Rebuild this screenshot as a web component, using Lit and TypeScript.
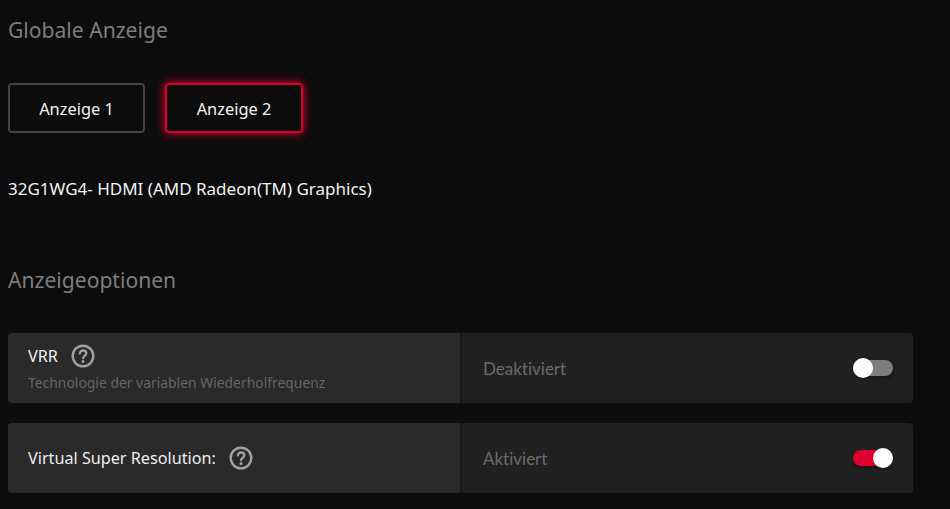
import { LitElement, html, css } from 'lit';
import { customElement } from 'lit/decorators.js';

const helpIcon = html`<svg class="help" viewBox="0 0 24 24" width="24" height="24" fill="none">
  <circle cx="12" cy="12" r="10.3" stroke="#a0a0a0" stroke-width="2.4"></circle>
  <path d="M8.8 9.6c0-1.9 1.4-3.1 3.3-3.1s3.2 1.1 3.2 2.8c0 1.3-.8 2-1.8 2.7-.9.6-1.4 1.1-1.4 2.2" stroke="#a0a0a0" stroke-width="2.3" stroke-linecap="round"></path>
  <circle cx="12" cy="17.6" r="1.5" fill="#a0a0a0"></circle>
</svg>`;

@customElement('app-root')
export class AppRoot extends LitElement {
  static styles = css`
    :host {
      display: block;
      height: 509px;
      overflow: hidden;
      background: #0c0c0c;
      color: #f2f2f2;
      font-family: 'Noto Sans', 'Open Sans', sans-serif;
    }
    .page {
      display: flex;
      flex-direction: column;
      width: 905px;
      padding: 16px 0 0 8px;
    }
    h2 {
      margin: 0;
      font-size: 21.1px;
      line-height: 28px;
      font-weight: 400;
      color: #7d7d7d;
    }
    .tabs {
      display: flex;
      gap: 20px;
      margin-top: 39px;
    }
    .tab {
      box-sizing: border-box;
      width: 137px;
      height: 50px;
      display: flex;
      align-items: center;
      justify-content: center;
      border: 2px solid #444;
      border-radius: 4px;
      font-size: 16.4px;
    }
    .tab.active {
      width: 138px;
      border-color: #d8002f;
      box-shadow: 0 0 8px 1px #c8002c;
    }
    .device {
      margin-top: 44px;
      font-size: 17px;
      line-height: 24px;
    }
    .options {
      margin-top: 65px;
    }
    .rows {
      display: flex;
      flex-direction: column;
      gap: 20px;
      margin-top: 39px;
    }
    .row {
      display: flex;
      height: 70px;
      border-radius: 4px;
      overflow: hidden;
      background: #212121;
    }
    .left {
      box-sizing: border-box;
      width: 454px;
      padding-left: 20px;
      display: flex;
      flex-direction: column;
      justify-content: center;
      background: #2a2a2a;
      border-right: 2px solid #1a1a1a;
      flex-shrink: 0;
    }
    .label {
      display: flex;
      align-items: center;
      gap: 13px;
      font-size: 16.2px;
      line-height: 24px;
      color: #eee;
    }
    .help {
      display: block;
    }
    .sub {
      font-size: 13.9px;
      line-height: 18px;
      margin-top: 6px;
      color: #666;
    }
    .right {
      flex: 1;
      display: flex;
      align-items: center;
      justify-content: space-between;
      padding: 0 20px 0 21px;
      font-family: 'Lato', 'Noto Sans', sans-serif;
      font-variant-ligatures: none;
      font-size: 17px;
      color: #6a6a6a;
    }
    .toggle {
      display: flex;
      align-items: center;
      width: 40px;
      height: 16px;
      border-radius: 8px;
      background: #7e7e7e;
      box-shadow: 0 2px 4px rgba(0, 0, 0, 0.4);
    }
    .toggle.on {
      justify-content: flex-end;
      background: #e0002e;
    }
    .knob {
      width: 20px;
      height: 20px;
      border-radius: 50%;
      background: #fff;
    }
  `;

  renderRow(label: unknown, sub: string, value: string, on: boolean) {
    return html`<div class="row">
      <div class="left">
        <div class="label">${label}${helpIcon}</div>
        ${sub ? html`<div class="sub">${sub}</div>` : ''}
      </div>
      <div class="right">
        <span>${value}</span>
        <div class="toggle ${on ? 'on' : ''}"><div class="knob"></div></div>
      </div>
    </div>`;
  }

  render() {
    return html`<div class="page">
      <h2>Globale Anzeige</h2>
      <div class="tabs">
        <div class="tab">Anzeige 1</div>
        <div class="tab active">Anzeige 2</div>
      </div>
      <div class="device">32G1WG4- HDMI (AMD Radeon(TM) Graphics)</div>
      <h2 class="options">Anzeigeoptionen</h2>
      <div class="rows">
        ${this.renderRow('VRR', 'Technologie der variablen Wiederholfrequenz', 'Deaktiviert', false)}
        ${this.renderRow('Virtual Super Resolution:', '', 'Aktiviert', true)}
      </div>
    </div>`;
  }
}
